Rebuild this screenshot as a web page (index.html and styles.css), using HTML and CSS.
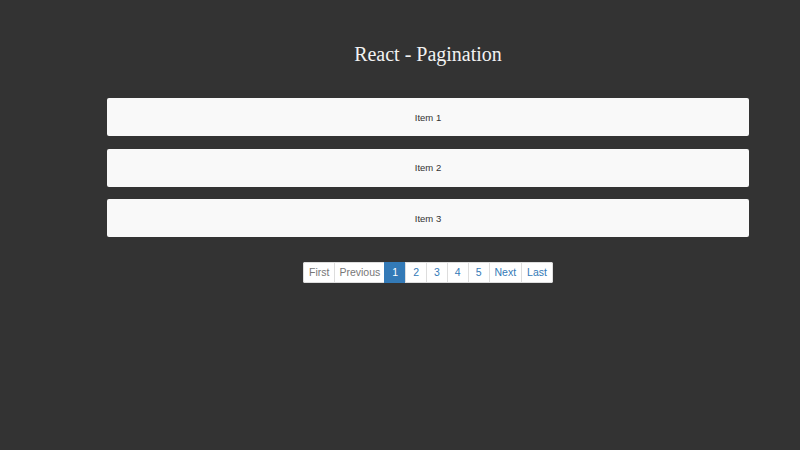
FILE: index.html
```html
<!DOCTYPE html>
<html>
<head>
<meta charset="utf-8">
<link rel="stylesheet" href="styles.css">
</head>
<body>
<div class="container">
  <h1 class="title">React - Pagination</h1>
  <div class="list">
    <div class="item">Item 1</div>
    <div class="item">Item 2</div>
    <div class="item">Item 3</div>
  </div>
  <div class="pager-wrap">
    <ul class="pager">
      <li class="cell disabled">First</li>
      <li class="cell disabled prev">Previous</li>
      <li class="cell num active">1</li>
      <li class="cell num">2</li>
      <li class="cell num">3</li>
      <li class="cell num">4</li>
      <li class="cell num">5</li>
      <li class="cell">Next</li>
      <li class="cell">Last</li>
    </ul>
  </div>
</div>
</body>
</html>
```

FILE: styles.css
```css
html, body {
  margin: 0;
  padding: 0;
  background: #333333;
  height: 100%;
}
body {
  font-family: "Liberation Sans", Arial, sans-serif;
}
.container {
  width: 642px;
  margin-left: 107px;
  padding-top: 43px;
}
.title {
  margin: 0;
  font-family: "Liberation Serif", "Times New Roman", serif;
  font-weight: normal;
  font-size: 20px;
  line-height: 22px;
  color: #f2f2f2;
  text-align: center;
}
.list {
  margin-top: 33px;
  display: flex;
  flex-direction: column;
  gap: 12.5px;
}
.item {
  height: 38px;
  background: #f9f9f9;
  border-radius: 2px;
  display: flex;
  align-items: center;
  justify-content: center;
  font-size: 9.5px;
  color: #333;
}
.pager-wrap {
  display: flex;
  justify-content: center;
  margin-top: 25px;
}
.pager {
  list-style: none;
  margin: 0;
  padding: 0;
  display: flex;
  background: #fff;
  border-radius: 2px;
}
.cell {
  height: 19px;
  line-height: 19px;
  padding: 0 5px;
  font-size: 10.5px;
  color: #337ab7;
  background: #fff;
  border: 1px solid #ddd;
  margin-left: -1px;
}
.cell:first-child {
  margin-left: 0;
  border-radius: 2px 0 0 2px;
}
.cell:last-child {
  border-radius: 0 2px 2px 0;
}
.cell.prev {
  padding: 0 4px;
}
.cell.num {
  padding: 0 7px;
}
.cell.disabled {
  color: #777;
}
.cell.active {
  background: #337ab7;
  border-color: #337ab7;
  color: #fff;
}
```
